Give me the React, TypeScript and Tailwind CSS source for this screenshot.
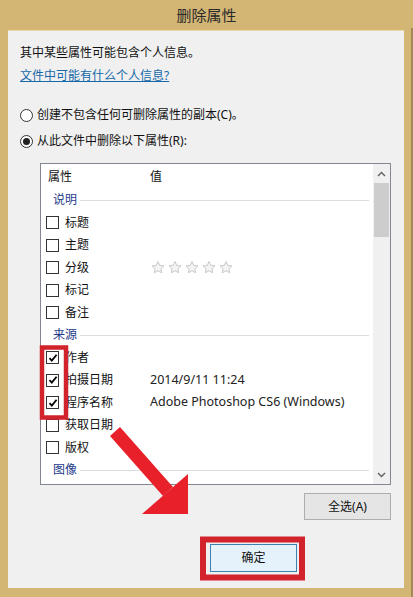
import React from "react";

const font = { fontFamily: '"Noto Sans", "Noto Sans CJK SC", sans-serif' };

type Row =
  | { kind: "group"; label: string }
  | { kind: "item"; label: string; checked?: boolean; value?: React.ReactNode };

function Stars() {
  return (
    <div className="flex gap-[1px]">
      {[0, 1, 2, 3, 4].map((i) => (
        <svg key={i} width="16" height="15" viewBox="0 0 24 24">
          <path
            d="M12 2.5l2.9 6.1 6.6.8-4.9 4.5 1.3 6.6L12 17.2l-5.9 3.3 1.3-6.6-4.9-4.5 6.6-.8z"
            fill="#f4f4f4"
            stroke="#c9c9c9"
            strokeWidth="1.6"
            strokeLinejoin="round"
          />
        </svg>
      ))}
    </div>
  );
}

const rows: Row[] = [
  { kind: "group", label: "说明" },
  { kind: "item", label: "标题" },
  { kind: "item", label: "主题" },
  { kind: "item", label: "分级", value: <Stars /> },
  { kind: "item", label: "标记" },
  { kind: "item", label: "备注" },
  { kind: "group", label: "来源" },
  { kind: "item", label: "作者", checked: true },
  { kind: "item", label: "拍摄日期", checked: true, value: "2014/9/11 11:24" },
  { kind: "item", label: "程序名称", checked: true, value: "Adobe Photoshop CS6 (Windows)" },
  { kind: "item", label: "获取日期" },
  { kind: "item", label: "版权" },
  { kind: "group", label: "图像" },
];

function Check({ checked }: { checked?: boolean }) {
  return (
    <span className="flex h-[13px] w-[13px] items-center justify-center border border-[#333] bg-white">
      {checked && (
        <svg width="10" height="10" viewBox="0 0 10 10">
          <path d="M1.5 5.2l2.3 2.4L8.6 1.8" fill="none" stroke="#000" strokeWidth="1.8" />
        </svg>
      )}
    </span>
  );
}

function Radio({ on }: { on?: boolean }) {
  return (
    <span className="flex h-[13px] w-[13px] items-center justify-center rounded-full border border-[#333] bg-white">
      {on && <span className="h-[7px] w-[7px] rounded-full bg-[#222]" />}
    </span>
  );
}

export default function App() {
  return (
    <div className="relative h-[597px] w-[413px] overflow-hidden bg-[#d3b574] text-[#111]" style={font}>
      {/* title bar */}
      <div className="flex h-[30px] items-center justify-center text-[15px] text-[#2a2a2a]">删除属性</div>

      {/* client area */}
      <div className="ml-[8px] h-[558px] w-[396px] border-t border-[#e9d9a8] bg-[#f0f0f0] pl-[12px] pt-[13px] text-[12px]">
        <p className="leading-[18px]">其中某些属性可能包含个人信息。</p>
        <p className="mt-[5px] leading-[18px] text-[#1668a8] underline">文件中可能有什么个人信息?</p>

        <div className="mt-[21px] flex h-[18px] items-center gap-[4px]">
          <Radio />
          <span>创建不包含任何可删除属性的副本(C)。</span>
        </div>
        <div className="mt-[8px] flex h-[18px] items-center gap-[4px]">
          <Radio on />
          <span>从此文件中删除以下属性(R):</span>
        </div>

        {/* list */}
        <div className="ml-[20px] mt-[13px] flex h-[322px] w-[351px] border border-[#828790] bg-white">
          <div className="flex-1">
            <div className="flex h-[25px] items-center">
              <span className="w-[109px] pl-[7px]">属性</span>
              <span>值</span>
            </div>
            {rows.map((r, i) =>
              r.kind === "group" ? (
                <div key={i} className="flex h-[22.5px] items-center pl-[12px] pr-[4px]">
                  <span className="text-[#1e3a8a]">{r.label}</span>
                  <span className="ml-[3px] h-px flex-1 bg-[#d9dee3]" />
                </div>
              ) : (
                <div key={i} className="flex h-[22.5px] items-center">
                  <span className="flex w-[109px] items-center gap-[6px] pl-[5px]">
                    <Check checked={r.checked} />
                    <span>{r.label}</span>
                  </span>
                  <span className="text-[12.5px] text-[#222]">{r.value}</span>
                </div>
              )
            )}
          </div>
          {/* scrollbar */}
          <div className="flex w-[17px] flex-col bg-[#f0f0f0]">
            <div className="flex h-[19px] items-center justify-center">
              <svg width="9" height="6" viewBox="0 0 9 6">
                <path d="M1 5l3.5-3.5L8 5" fill="none" stroke="#606060" strokeWidth="1.4" />
              </svg>
            </div>
            <div className="mx-[1px] h-[54px] bg-[#cdcdcd]" />
            <div className="flex-1" />
            <div className="flex h-[19px] items-center justify-center">
              <svg width="9" height="6" viewBox="0 0 9 6">
                <path d="M1 1l3.5 3.5L8 1" fill="none" stroke="#606060" strokeWidth="1.4" />
              </svg>
            </div>
          </div>
        </div>

        <div className="mt-[8px] flex justify-end pr-[13px]">
          <button className="flex h-[27px] w-[87px] items-center justify-center border border-[#adadad] bg-[#e5e5e5] text-[12px]">
            全选(A)
          </button>
        </div>

        <div className="mt-[24px] flex">
          <button className="ml-[190px] flex h-[28px] w-[87px] items-center justify-center border border-[#3c7fb1] bg-[#e5f1fb] text-[12px]">
            确定
          </button>
        </div>
      </div>

      {/* right frame shading */}
      <div className="absolute right-0 top-[28px] h-[569px] w-[2px] bg-[#a38a55]" />

      {/* annotations */}
      <svg className="pointer-events-none absolute left-0 top-0" width="413" height="597">
        <rect x="42" y="347.5" width="24" height="70" fill="none" stroke="#d2232c" strokeWidth="4.5" />
        <rect x="203" y="539.5" width="99" height="38" fill="none" stroke="#d2232c" strokeWidth="6" />
        <polygon points="120,427 110,436 163,496 173,487" fill="#e8202a" />
        <polygon points="188,474 188,514 142,514" fill="#e8202a" />
      </svg>
    </div>
  );
}
